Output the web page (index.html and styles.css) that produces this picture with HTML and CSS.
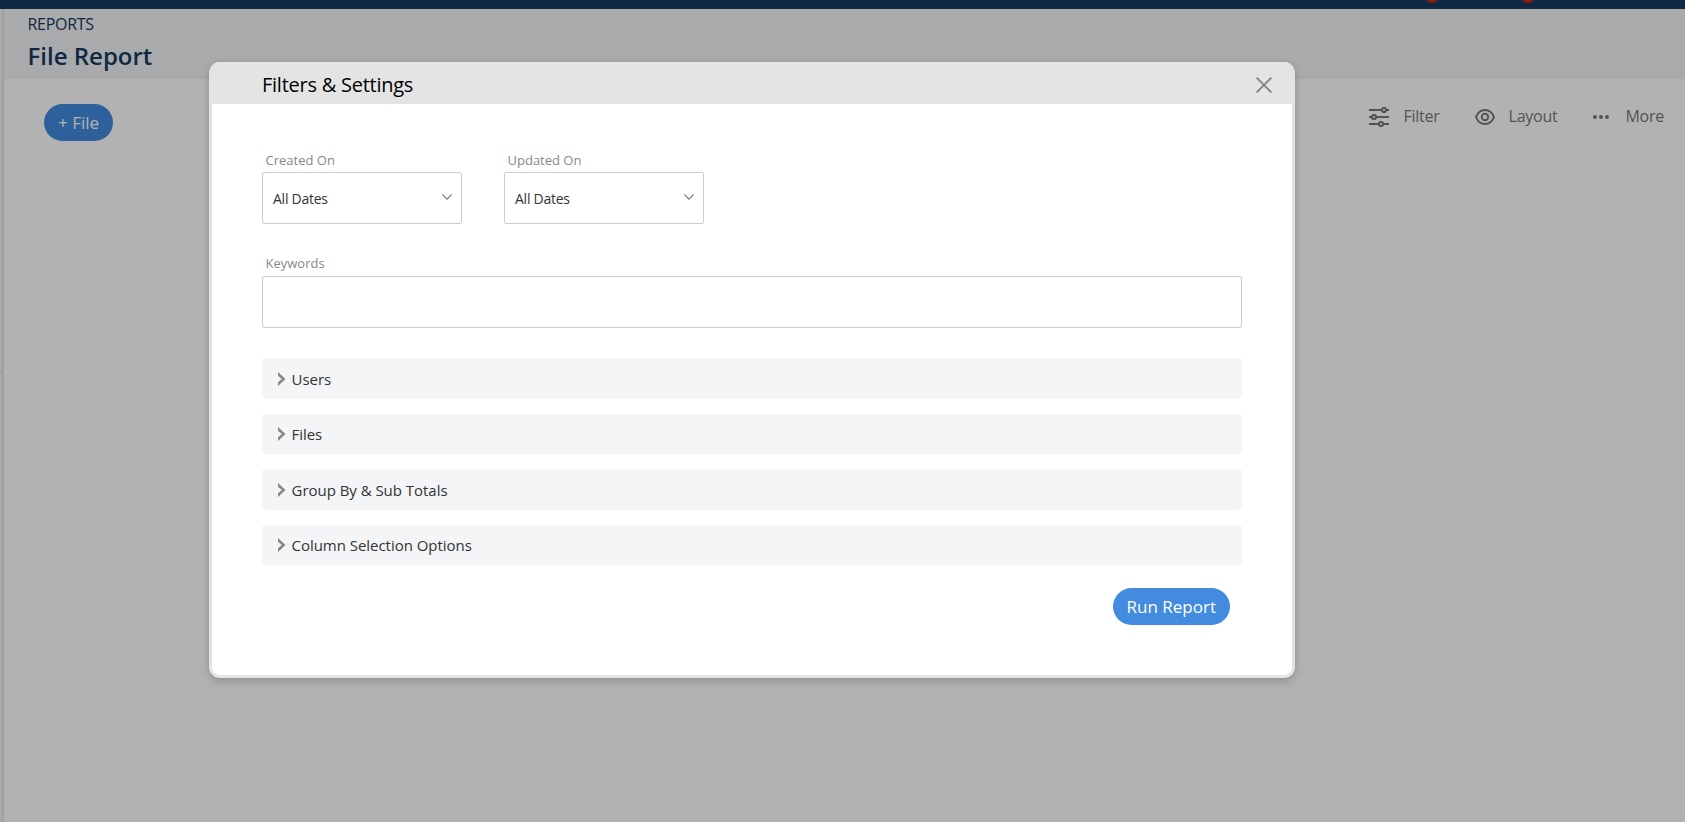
FILE: index.html
```html
<!DOCTYPE html>
<html lang="en">
<head>
    <meta charset="UTF-8">
    <meta name="viewport" content="width=device-width, initial-scale=1.0">
    <title>File Report</title>
    <link rel="stylesheet" href="styles.css">
</head>
<body>
    <div class="page">
        <div class="top-nav">
            <span class="badge"></span>
            <span class="badge"></span>
        </div>
        <div class="layout">
            <div class="sidebar"><div class="divider"></div></div>
            <div class="main">
                <div class="page-header">
                    <div class="breadcrumb">REPORTS</div>
                    <h1>File Report</h1>
                </div>
                <div class="toolbar">
                    <button type="button" class="btn">+ File</button>
                    <div class="actions">
                        <a class="action">
                            <svg width="20" height="20" viewBox="0 0 20 20" fill="none" stroke="currentColor" stroke-width="2">
                                <path d="M0 3h12.5M17.5 3H20M0 10h2.5M7.5 10H20M0 17h9.5M14.500 17H20"/>
                                <circle cx="15" cy="3" r="2.100"/>
                                <circle cx="5" cy="10" r="2.100"/>
                                <circle cx="12" cy="17" r="2.100"/>
                            </svg>
                            <span>Filter</span>
                        </a>
                        <a class="action">
                            <svg width="20" height="20" viewBox="0 0 20 20" fill="none" stroke="currentColor" stroke-width="2">
                                <path d="M1 10C2.800 5.500 6 3 10 3s7.200 2.500 9 7c-1.800 4.500-5 7-9 7S2.800 14.500 1 10z"/>
                                <circle cx="10" cy="10" r="3.200"/>
                            </svg>
                            <span>Layout</span>
                        </a>
                        <a class="action action-more">
                            <svg width="16" height="20" viewBox="0 0 16 20" fill="currentColor">
                                <circle cx="2" cy="10" r="2"/>
                                <circle cx="8" cy="10" r="2"/>
                                <circle cx="14" cy="10" r="2"/>
                            </svg>
                            <span>More</span>
                        </a>
                    </div>
                </div>
            </div>
        </div>
    </div>

    <div class="overlay">
        <div class="modal">
            <div class="modal-header">
                <h2>Filters &amp; Settings</h2>
                <svg class="close" width="16" height="16" viewBox="0 0 16 16" fill="none" stroke="currentColor" stroke-width="1.8">
                    <path d="M0.600 0.600l14.800 14.800M15.400 0.600L0.600 15.400"/>
                </svg>
            </div>
            <div class="modal-body">
                <div class="date-row">
                    <div class="form-group">
                        <label>Created On</label>
                        <div class="select">
                            <span>All Dates</span>
                            <svg width="10" height="6" viewBox="0 0 10 6" fill="none" stroke="currentColor" stroke-width="1.300"><path d="M0.400 0.500L5 5.100 9.600 0.500"/></svg>
                        </div>
                    </div>
                    <div class="form-group">
                        <label>Updated On</label>
                        <div class="select">
                            <span>All Dates</span>
                            <svg width="10" height="6" viewBox="0 0 10 6" fill="none" stroke="currentColor" stroke-width="1.300"><path d="M0.400 0.500L5 5.100 9.600 0.500"/></svg>
                        </div>
                    </div>
                </div>
                <div class="form-group keywords">
                    <label for="keywords">Keywords</label>
                    <input type="text" id="keywords" name="keywords">
                </div>
                <div class="sections">
                    <div class="section">
                        <svg width="8" height="14" viewBox="0 0 8 14" fill="currentColor"><path d="M0 0l7.500 7L0 14v-3.800L3.800 7 0 3.800z"/></svg>
                        <span>Users</span>
                    </div>
                    <div class="section">
                        <svg width="8" height="14" viewBox="0 0 8 14" fill="currentColor"><path d="M0 0l7.500 7L0 14v-3.800L3.800 7 0 3.800z"/></svg>
                        <span>Files</span>
                    </div>
                    <div class="section">
                        <svg width="8" height="14" viewBox="0 0 8 14" fill="currentColor"><path d="M0 0l7.500 7L0 14v-3.800L3.800 7 0 3.800z"/></svg>
                        <span>Group By &amp; Sub Totals</span>
                    </div>
                    <div class="section">
                        <svg width="8" height="14" viewBox="0 0 8 14" fill="currentColor"><path d="M0 0l7.500 7L0 14v-3.800L3.800 7 0 3.800z"/></svg>
                        <span>Column Selection Options</span>
                    </div>
                </div>
                <div class="modal-footer">
                    <button type="button" class="btn">Run Report</button>
                </div>
            </div>
        </div>
    </div>
</body>
</html>
```
FILE: styles.css
```css
* {
    box-sizing: border-box;
}

body {
    margin: 0;
    font-family: "Open Sans", sans-serif;
    background-color: white;
    overflow: hidden;
}

.page {
    height: 100vh;
    display: flex;
    flex-direction: column;
}

.top-nav {
    height: 9px;
    flex: none;
    background-color: #163a60;
    display: flex;
    justify-content: flex-end;
    align-items: flex-end;
    gap: 82px;
    padding: 0 150px 6px 0;
    overflow: hidden;
}

.badge {
    width: 14px;
    height: 14px;
    flex: none;
    border-radius: 50%;
    background-color: #cb2c1d;
}

.layout {
    display: flex;
    flex: 1;
}

.sidebar {
    width: 4px;
    padding-top: 362px;
    background-color: #f4f4f4;
    border-right: 2px solid #e4e4e4;
}

.divider {
    height: 1px;
    background-color: #d8d8d8;
}

.main {
    flex: 1;
}

.page-header {
    height: 70px;
    padding: 4px 23.5px;
    background-color: #f3f4f6;
    color: #163a60;
}

.breadcrumb {
    font-size: 16px;
    line-height: 22px;
    letter-spacing: -0.3px;
}

h1 {
    margin: 4px 0 0;
    font-size: 24px;
    line-height: 33px;
    font-weight: 600;
}

.toolbar {
    display: flex;
    justify-content: space-between;
    align-items: flex-start;
    padding: 25px 21px 0 40px;
}

.btn {
    height: 37px;
    padding: 0 14px;
    border: none;
    border-radius: 19px;
    background-color: #428bde;
    color: white;
    font-family: inherit;
    font-size: 17px;
    cursor: pointer;
}

.actions {
    display: flex;
    gap: 35px;
    padding-top: 1px;
    color: #777;
    font-size: 16px;
    line-height: 22px;
    letter-spacing: -0.25px;
}

.action {
    display: flex;
    align-items: center;
    gap: 14px;
}

.action svg {
    margin-top: 2px;
}

.action-more {
    gap: 16px;
    margin-left: 1px;
}

.overlay {
    position: absolute;
    inset: 0;
    background-color: rgba(0,0,0,0.3);
    padding: 62px 0 0 209px;
}

.modal {
    width: 1086px;
    height: 616px;
    border: 3px solid #e4e4e4;
    border-top: none;
    border-radius: 11px;
    background-color: white;
    box-shadow: 0 3px 10px rgba(0,0,0,0.2);
}

.modal-header {
    display: flex;
    align-items: center;
    justify-content: space-between;
    height: 42px;
    padding: 0 20px 0 50px;
    border-radius: 8px 8px 0 0;
    background-color: #e4e4e4;
}

h2 {
    margin: 2px 0 0;
    font-size: 20px;
    line-height: 27px;
    font-weight: normal;
    letter-spacing: -0.25px;
}

.close {
    margin-top: 4px;
    color: #808080;
}

.modal-body {
    padding: 46px 50px 0;
}

.date-row {
    display: flex;
    gap: 42px;
    margin-bottom: 30px;
}

label {
    display: block;
    height: 22px;
    padding-left: 3.5px;
    font-size: 13px;
    line-height: 20px;
    color: #888;
}

.keywords label {
    line-height: 18px;
}

.select {
    display: flex;
    align-items: center;
    justify-content: space-between;
    width: 200px;
    height: 52px;
    padding: 0 9px 0 10px;
    border: 1px solid #ccc;
    border-radius: 2px;
    font-size: 14px;
    letter-spacing: -0.25px;
    color: #333;
}

.select svg {
    margin-bottom: 3px;
    color: #808080;
}

input {
    display: block;
    width: 100%;
    height: 52px;
    border: 1px solid #ccc;
    border-radius: 2px;
}

.sections {
    display: flex;
    flex-direction: column;
    gap: 15px;
    margin-top: 30px;
}

.section {
    display: flex;
    align-items: center;
    gap: 5.5px;
    height: 40.5px;
    padding-left: 16px;
    border-radius: 4px;
    background-color: #f3f5f7;
    font-size: 15px;
    letter-spacing: -0.03px;
    color: #333;
}

.section svg {
    margin-top: 1px;
    color: #888;
}

.section span {
    padding-top: 1px;
}

.modal-footer {
    display: flex;
    justify-content: flex-end;
    padding: 23px 12px 0 0;
}
```
